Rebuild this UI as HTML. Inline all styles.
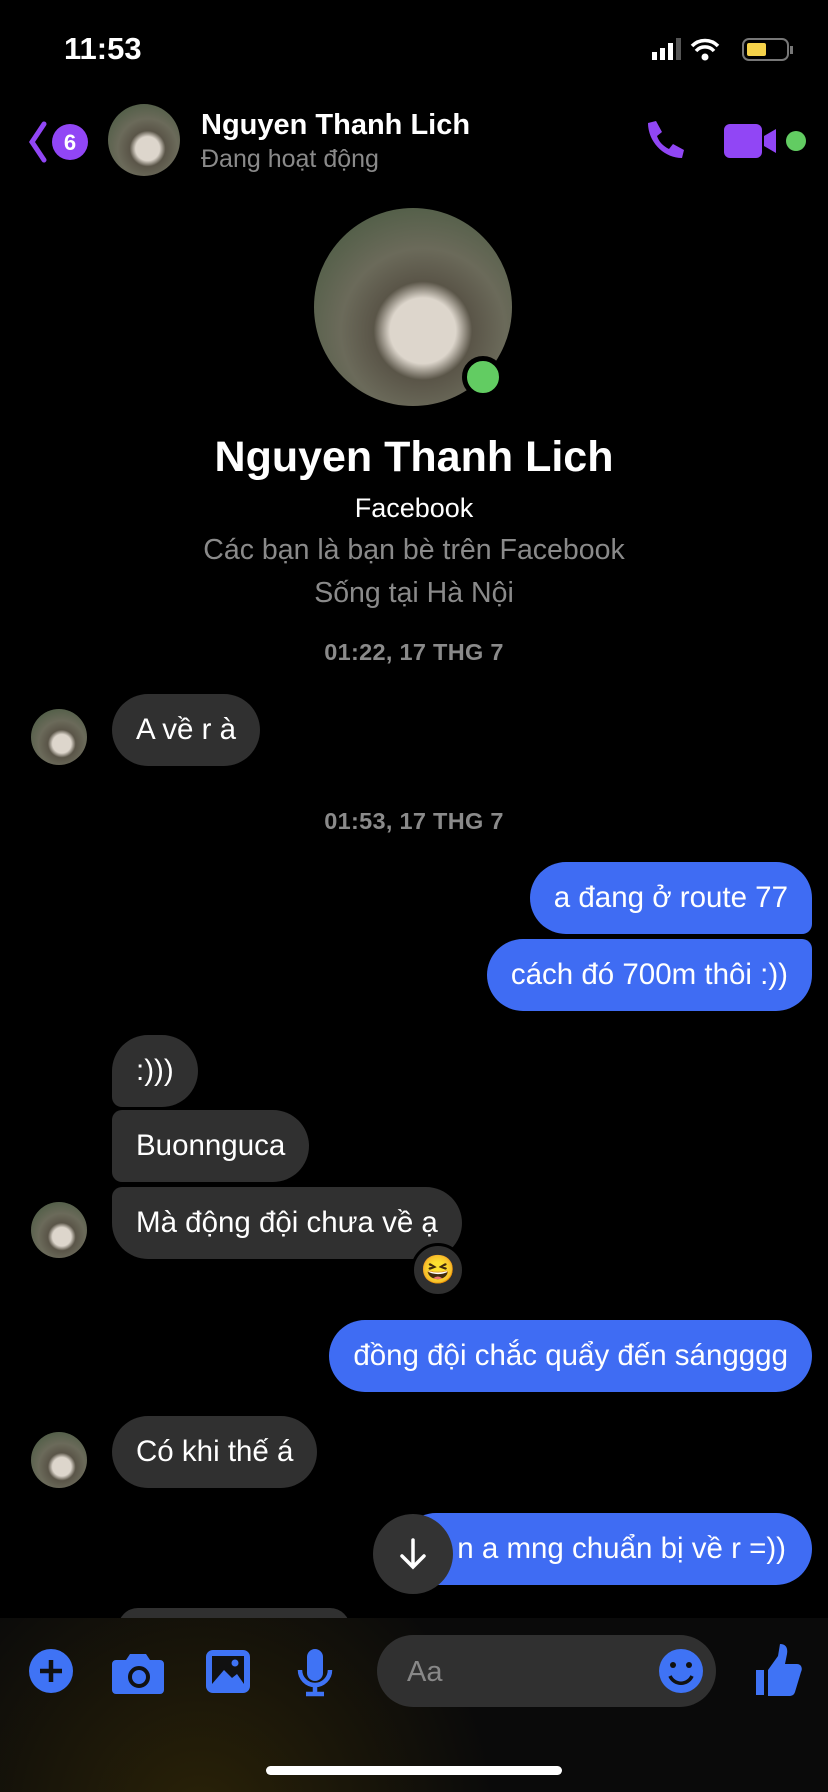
<!DOCTYPE html>
<html><head><meta charset="utf-8"><style>
*{margin:0;padding:0;box-sizing:border-box}
body{width:828px;height:1792px;background:#000;position:relative;overflow:hidden;font-family:"Liberation Sans",sans-serif;color:#fff}
.a{position:absolute}
.b{position:absolute;height:72px;border-radius:36px;font-size:29.5px;line-height:72px;padding:0 24px;white-space:nowrap}
.r{background:#303030}
.s{background:#3f6cf3}
.av{position:absolute;border-radius:50%;background:radial-gradient(circle at 55% 62%,#ddd6cc 0 20%,#5a5548 30%,#6b6a5a 50%,#55604a 75%,#3f4a35)}
.c{text-align:center;width:828px;left:0}
.t{font-size:23.5px;color:#8a8a8a;font-weight:bold;letter-spacing:0.3px}
</style></head><body>
<div class="a" style="left:64px;top:31px;font-size:31px;font-weight:bold">11:53</div>
<svg class="a" style="left:650px;top:36px" width="150" height="30">
<rect x="2" y="16" width="5" height="8" fill="#fff"/><rect x="10" y="12" width="5" height="12" fill="#fff"/><rect x="18" y="7" width="5" height="17" fill="#fff"/><rect x="26" y="2" width="5" height="22" fill="#555"/>
<path d="M42 10a18 18 0 0 1 26 0M46 15a12 12 0 0 1 18 0" stroke="#fff" stroke-width="3.5" fill="none"/><circle cx="55" cy="21" r="3.5" fill="#fff"/>
<rect x="93" y="3" width="45" height="21" rx="6" fill="none" stroke="#777" stroke-width="2"/><rect x="97" y="7" width="19" height="13" rx="2" fill="#f5d24a"/><rect x="140" y="10" width="3" height="8" fill="#777"/>
</svg>
<svg class="a" style="left:24px;top:120px" width="70" height="44"><path d="M20 4L8 22l12 18" stroke="#9146f5" stroke-width="5" fill="none" stroke-linecap="round"/><circle cx="46" cy="22" r="18" fill="#9146f5"/><text x="46" y="30" font-size="22" font-weight="bold" fill="#fff" text-anchor="middle" font-family="Liberation Sans">6</text></svg>
<div class="av" style="left:108px;top:104px;width:72px;height:72px"></div>
<div class="a" style="left:201px;top:109px;font-size:29px;font-weight:bold">Nguyen Thanh Lich</div>
<div class="a" style="left:201px;top:145px;font-size:25px;color:#8a8a8a">Đang hoạt động</div>
<svg class="a" style="left:640px;top:117px" width="48" height="48"><path d="M8 6l8-2 6 11-5 4c2 6 6 10 12 13l4-5 11 6-2 8c-18 0-34-16-34-35z" fill="#9146f5"/></svg>
<svg class="a" style="left:722px;top:120px" width="90" height="42"><rect x="2" y="4" width="38" height="34" rx="6" fill="#9146f5"/><path d="M42 16l12-7v24l-12-7z" fill="#9146f5"/><circle cx="74" cy="21" r="10" fill="#62cc62"/></svg>
<div class="av" style="left:314px;top:208px;width:198px;height:198px"></div>
<div class="a" style="left:462px;top:356px;width:42px;height:42px;border-radius:50%;background:#62cc62;border:5px solid #000"></div>
<div class="a c" style="top:433px;font-size:43px;font-weight:bold">Nguyen Thanh Lich</div>
<div class="a c" style="top:493px;font-size:27px">Facebook</div>
<div class="a c" style="top:534px;font-size:28.5px;color:#8a8a8a">Các bạn là bạn bè trên Facebook</div>
<div class="a c" style="top:577px;font-size:28.5px;color:#8a8a8a">Sống tại Hà Nội</div>
<div class="a c t" style="top:639px">01:22, 17 THG 7</div>
<div class="av" style="left:31px;top:709px;width:56px;height:56px"></div>
<div class="b r" style="left:112px;top:694px">A về r à</div>
<div class="a c t" style="top:808px">01:53, 17 THG 7</div>
<div class="b s" style="right:16px;top:862px;border-bottom-right-radius:10px">a đang ở route 77</div>
<div class="b s" style="right:16px;top:939px;border-top-right-radius:10px">cách đó 700m thôi :))</div>
<div class="b r" style="left:112px;top:1035px;border-bottom-left-radius:10px">:)))</div>
<div class="b r" style="left:112px;top:1110px;border-radius:10px 36px 36px 10px">Buonnguca</div>
<div class="b r" style="left:112px;top:1187px;border-top-left-radius:10px">Mà động đội chưa về ạ</div>
<div class="av" style="left:31px;top:1202px;width:56px;height:56px"></div>
<div class="a" style="left:411px;top:1243px;width:54px;height:54px;border-radius:50%;background:#303030;border:3px solid #000;font-size:28px;text-align:center;line-height:48px">😆</div>
<div class="b s" style="right:16px;top:1320px">đồng đội chắc quẩy đến sángggg</div>
<div class="av" style="left:31px;top:1432px;width:56px;height:56px"></div>
<div class="b r" style="left:112px;top:1416px">Có khi thế á</div>
<div class="b s" style="right:16px;top:1513px;width:412px;text-align:right;padding-right:26px">n a mng chuẩn bị về r =))</div>
<div class="a" style="left:373px;top:1514px;width:80px;height:80px;border-radius:50%;background:#333"></div>
<svg class="a" style="left:393px;top:1534px" width="40" height="40"><path d="M20 6v26M9 22l11 11 11-11" stroke="#fff" stroke-width="3.5" fill="none" stroke-linecap="round"/></svg>
<div class="a" style="left:118px;top:1608px;width:232px;height:40px;border-radius:20px;background:#303030"></div>
<div class="a" style="left:0;top:1618px;width:828px;height:174px;background:radial-gradient(circle at 200px 200px,#2a2208 0,#0a0a0a 45%,#0a0a0a)"></div>
<svg class="a" style="left:0;top:1630px" width="828" height="90">
<circle cx="51" cy="41" r="22" fill="#3f73f5"/><path d="M51 30v22M40 41h22" stroke="#111" stroke-width="4.5"/>
<path d="M116 30h10l4-6h16l4 6h10a4 4 0 0 1 4 4v26a4 4 0 0 1-4 4h-44a4 4 0 0 1-4-4v-26a4 4 0 0 1 4-4z" fill="#3f73f5"/><circle cx="139" cy="47" r="9" fill="none" stroke="#111" stroke-width="4"/>
<rect x="206" y="20" width="44" height="43" rx="7" fill="#3f73f5"/><rect x="212" y="26" width="32" height="28" fill="#111"/><path d="M212 54l12-14 8 8 5-4 7 10z" fill="#3f73f5"/><circle cx="235" cy="33" r="3.5" fill="#3f73f5"/>
<rect x="307" y="19" width="16" height="32" rx="8" fill="#3f73f5"/><path d="M300 40a15 15 0 0 0 30 0M315 55v8M306 64h18" stroke="#3f73f5" stroke-width="4.5" fill="none"/>
<rect x="377" y="5" width="339" height="72" rx="36" fill="#303030"/>
<text x="407" y="51" font-size="29" fill="#888" font-family="Liberation Sans">Aa</text>
<circle cx="681" cy="41" r="22" fill="#3f73f5"/><circle cx="673" cy="35" r="3" fill="#111"/><circle cx="689" cy="35" r="3" fill="#111"/><path d="M670 46a12 12 0 0 0 22 0" stroke="#111" stroke-width="3.5" fill="none"/>
<path d="M756 40h8v25h-8zM768 40l10-14 2-12c6 0 8 4 7 10l-2 10h12c4 0 6 4 4 8l-6 20c-1 3-3 4-6 4h-21z" fill="#3f73f5"/>
</svg>
<div class="a" style="left:266px;top:1766px;width:296px;height:9px;border-radius:5px;background:#fff"></div>
</body></html>
